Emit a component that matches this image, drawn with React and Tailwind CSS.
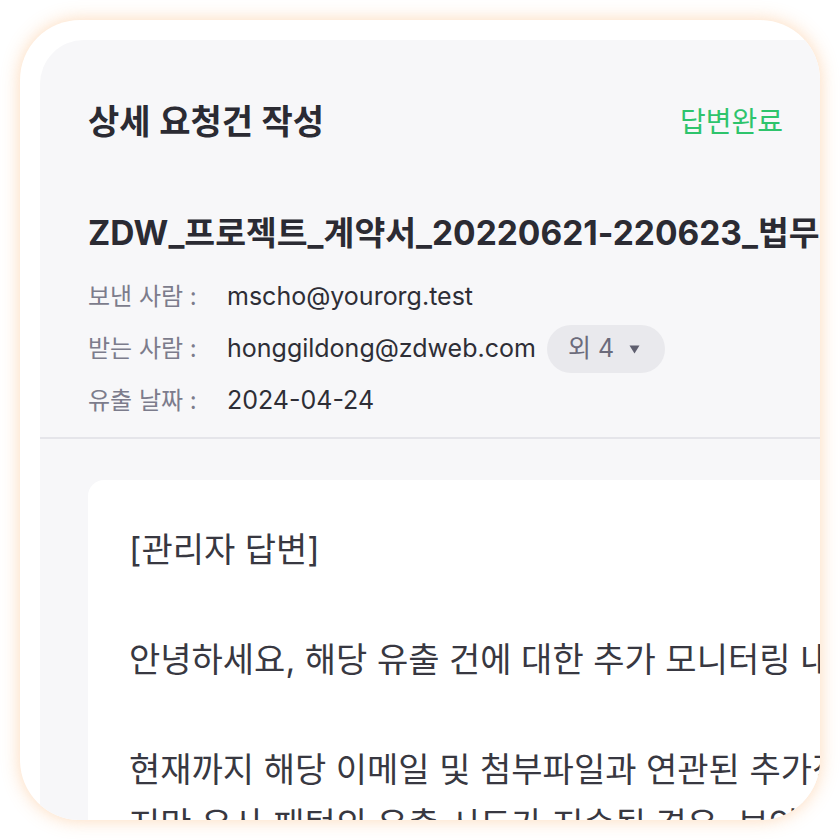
import React from 'react';

const FONT = { fontFamily: '"Inter", "Noto Sans CJK KR", sans-serif' };

const MetaRow = ({ label, value, extra }) => (
  <div className="flex items-center h-[52px]">
    <span className="w-[139px] shrink-0 text-[24px] text-[#7c7c8c]">{label}</span>
    <span className="text-[25px] text-[#2e2e36] whitespace-nowrap">{value}</span>
    {extra}
  </div>
);

const App = () => {
  return (
    <div className="w-[840px] h-[840px] bg-white p-[20px]" style={FONT}>
      <div className="w-[800px] h-[800px] rounded-[60px] bg-white overflow-hidden pl-[20px] pt-[20px] shadow-[0_0_18px_rgba(250,165,85,0.42)]">
        <div className="w-[780px] h-[900px] bg-[#f7f7f9] rounded-tl-[44px]">
          {/* 헤더 */}
          <div className="flex items-center justify-between pl-[48px] pr-[37px] pt-[62px]">
            <h1 className="text-[34px] leading-[40px] font-semibold text-[#2b2b33]">상세 요청건 작성</h1>
            <span className="text-[28px] leading-[40px] text-[#2ec46c]">답변완료</span>
          </div>

          <div className="pl-[48px]">
            <h2 className="mt-[69px] text-[33.5px] leading-[44px] font-bold text-[#2b2b33] whitespace-nowrap">
              ZDW_프로젝트_계약서_20220621-220623_법무팀_최종본.pdf
            </h2>
            <div className="mt-[16px]">
              <MetaRow label="보낸 사람 :" value="mscho@yourorg.test" />
              <MetaRow
                label="받는 사람 :"
                value="honggildong@zdweb.com"
                extra={
                  <button className="ml-[11px] h-[48px] pl-[21px] pr-[25px] rounded-full bg-[#e9e9ed] flex items-center gap-[15px] text-[25px] text-[#6b6b7b]">
                    외 4
                    <svg width="11" height="9" viewBox="0 0 11 9"><path d="M0.5 0.5h10L5.5 8.5z" fill="#5f5f6f" /></svg>
                  </button>
                }
              />
              <MetaRow label="유출 날짜 :" value="2024-04-24" />
            </div>
          </div>

          <div className="mt-[10px] h-[2px] bg-[#e5e5ea]" />

          {/* 답변 본문 */}
          <div className="ml-[48px] mt-[41px] w-[1200px] h-[500px] bg-white rounded-tl-[16px] pl-[41px] pt-[42px] text-[34px] leading-[55px] text-[#383841] whitespace-nowrap">
            <p>[관리자 답변]</p>
            <p>&nbsp;</p>
            <p>안녕하세요, 해당 유출 건에 대한 추가 모니터링 내역을 안내드립니다.</p>
            <p>&nbsp;</p>
            <p>현재까지 해당 이메일 및 첨부파일과 연관된 추가적인 유출 정황은 발견되지 않았</p>
            <p>지만 유사 패턴의 유출 시도가 지속될 경우, 보안팀에서 별도로 연락드리겠습니다.</p>
          </div>
        </div>
      </div>
    </div>
  );
};

export default App;
